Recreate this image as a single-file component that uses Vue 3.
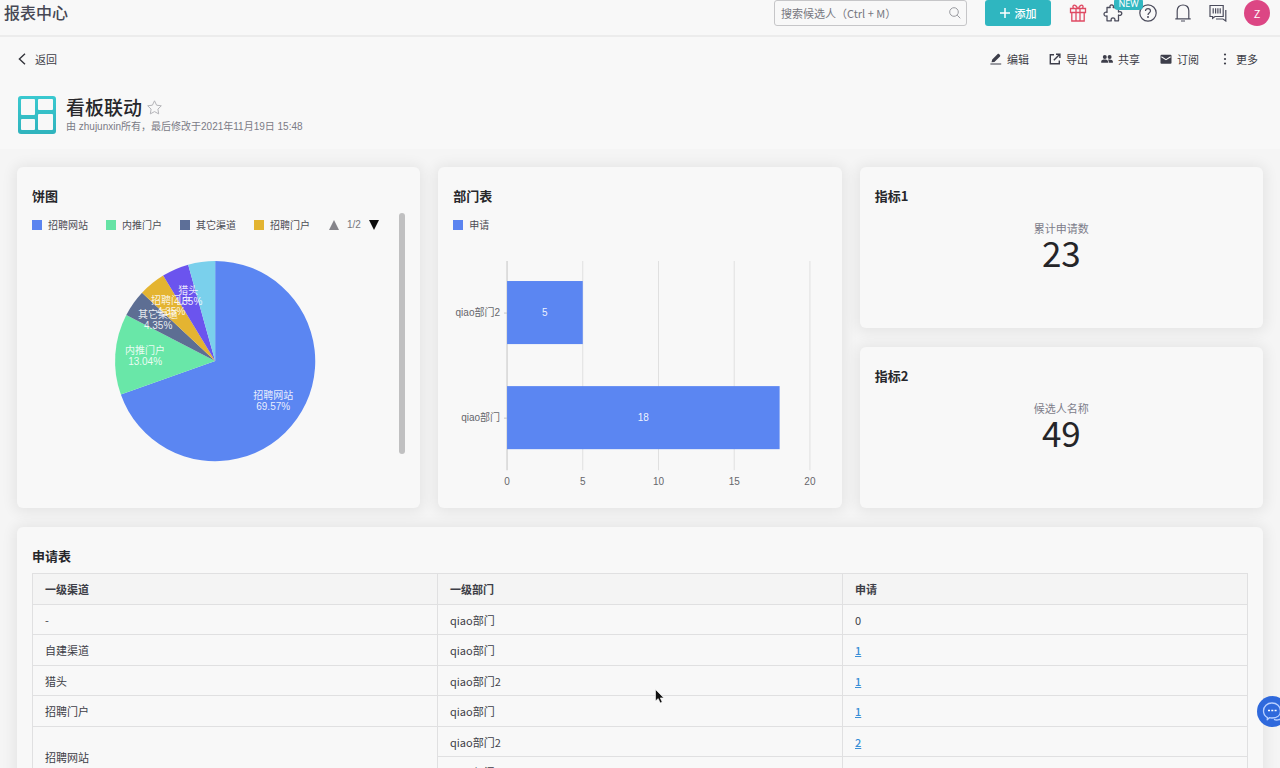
<script setup>
const legend = [
  { name: '招聘网站', color: '#5b84f0' },
  { name: '内推门户', color: '#66e3a5' },
  { name: '其它渠道', color: '#5d6f98' },
  { name: '招聘门户', color: '#e3b431' },
]

const cx = 183
const cy = 111
const radius = 100
const shares = [
  { value: 16, color: '#5b86f2' },
  { value: 3, color: '#69e7a8' },
  { value: 1, color: '#5d6e93' },
  { value: 1, color: '#e4b431' },
  { value: 1, color: '#6b54ee' },
  { value: 1, color: '#7ad0ec' },
]
const total = shares.reduce((sum, s) => sum + s.value, 0)
let start = 0
const slices = shares.map((s) => {
  const end = start + (s.value / total) * Math.PI * 2
  const point = (a) => `${(cx + radius * Math.sin(a)).toFixed(2)} ${(cy - radius * Math.cos(a)).toFixed(2)}`
  const large = end - start > Math.PI ? 1 : 0
  const d = `M${cx} ${cy}L${point(start)}A${radius} ${radius} 0 ${large} 1 ${point(end)}Z`
  start = end
  return { d, color: s.color }
})
const pieLabels = [
  { x: 241, y: 149, name: '招聘网站', pct: '69.57%' },
  { x: 113, y: 104, name: '内推门户', pct: '13.04%' },
  { x: 156, y: 44, name: '猎头', pct: '4.35%' },
  { x: 139, y: 54, name: '招聘门户', pct: '4.35%' },
  { x: 126, y: 68, name: '其它渠道', pct: '4.35%' },
]

const scale = (v) => 54 + v * 15.13
const ticks = [0, 5, 10, 15, 20]
const bars = [
  { name: 'qiao部门2', value: 5, y: 31 },
  { name: 'qiao部门', value: 18, y: 136 },
]

const metrics = [
  { title: '指标1', label: '累计申请数', value: 23 },
  { title: '指标2', label: '候选人名称', value: 49 },
]

const rows = [
  { channel: '-', dept: 'qiao部门', count: 0 },
  { channel: '自建渠道', dept: 'qiao部门', count: 1 },
  { channel: '猎头', dept: 'qiao部门2', count: 1 },
  { channel: '招聘门户', dept: 'qiao部门', count: 1 },
  { channel: '招聘网站', span: 2, dept: 'qiao部门2', count: 2 },
  { dept: 'qiao部门', count: 14 },
]
</script>

<template>
  <div class="page">
    <header class="topbar">
      <h1>报表中心</h1>
      <div class="search">
        <input type="text" aria-label="搜索候选人" placeholder="搜索候选人（Ctrl + M）" />
        <svg width="12" height="12" viewBox="0 0 12 12" fill="none" stroke="#9a9ba0"><circle cx="5" cy="5" r="4.3" /><path d="M8.2 8.2L11.3 11.3" /></svg>
      </div>
      <button class="add" type="button">
        <svg width="10" height="10" viewBox="0 0 10 10" stroke="#fff" stroke-width="1.5"><path d="M5 0V10M0 5H10" /></svg>
        添加
      </button>
      <nav class="tools">
        <button type="button" aria-label="礼物">
          <svg width="18" height="18" viewBox="0 0 18 18" fill="none" stroke="#df4a63" stroke-width="1.3"><path d="M1.5 4.5H16.5V8.5H1.5ZM2.8 8.5V17H15.2V8.5M7 4.5V17M11 4.5V17M8.5 4.3C7.5 1.6 5.8.8 4.7 1.4C3.4 2.2 3.8 3.8 5 4.4M9.5 4.3C10.5 1.6 12.2.8 13.3 1.4C14.6 2.2 14.2 3.8 13 4.4" /></svg>
        </button>
        <button type="button" aria-label="插件">
          <svg width="20" height="18" viewBox="0 0 20 18" fill="none" stroke="#4b4c5c" stroke-width="1.3" stroke-linejoin="round"><path d="M4 3.5H7.2C6.4 1.8 7.4.8 8.7.8S11 1.9 10.2 3.5H15.5V8C17.3 7.2 18.8 8 18.8 9.5S17.3 11.8 15.5 11V16.8H11.8C12.4 15 11.4 13.9 10 13.9S7.7 15 8.3 16.8H4V11.8C2.2 12.6 1 11.4 1 10.1S2.3 7.7 4 8.4Z" /></svg>
          <span class="new">NEW</span>
        </button>
        <button type="button" aria-label="帮助">
          <svg width="18" height="18" viewBox="0 0 18 18" fill="none" stroke="#4b4c5c" stroke-width="1.2"><circle cx="9" cy="9" r="8.2" /><path d="M6.5 7.1C6.5 5.5 7.5 4.6 9 4.6S11.5 5.6 11.5 6.9C11.5 8.7 9 8.7 9 11" /><circle cx="9" cy="13.1" r=".4" fill="#4b4c5c" /></svg>
        </button>
        <button type="button" aria-label="通知">
          <svg width="18" height="18" viewBox="0 0 18 18" fill="none" stroke="#4b4c5c" stroke-width="1.2"><path d="M1.3 14.8H16.7M3.2 14.8V6.8C3.2 3.1 5.6 1 9 1S14.8 3.1 14.8 6.8V14.8M7 17H11" /></svg>
        </button>
        <button type="button" aria-label="消息">
          <svg width="18" height="18" viewBox="0 0 18 18" fill="none" stroke="#4b4c5c" stroke-width="1.2"><path d="M1 1.5H14.2V12.5H6L3.6 14.3V12.5H1ZM4.2 4.3V9.5M6.6 4.3V9.5M8.9 4.3V9.5M11.2 4.3V9.5M16.8 6V17L14 15H7" /></svg>
        </button>
      </nav>
      <button class="avatar" type="button">Z</button>
    </header>

    <div class="actions">
      <button class="back" type="button">
        <svg width="8" height="12" viewBox="0 0 8 12" fill="none" stroke="#33343b" stroke-width="1.4"><path d="M7 .8L1.4 6L7 11.2" /></svg>
        返回
      </button>
      <div class="menu">
        <button type="button">
          <svg width="12" height="12" viewBox="0 0 12 12" fill="#3d3e4a"><path d="M1.5 9.3L2.2 6.6L7.7 1.1C8.1.7 8.6.7 9 1.1L10 2.1C10.4 2.5 10.4 3 10 3.4L4.4 8.9ZM.4 10.4H11.2V11.4H.4Z" /></svg>
          编辑
        </button>
        <div class="pair">
          <button type="button">
            <svg width="12" height="12" viewBox="0 0 12 12" fill="none" stroke="#3d3e4a" stroke-width="1.4"><path d="M5 1.7H1.3V10.8H10.3V7.5M4.8 7.2L10 2M7 1.2H10.9V5" /></svg>
            导出
          </button>
          <button type="button">
            <svg width="12" height="12" viewBox="0 0 12 12" fill="#3d3e4a"><circle cx="3.8" cy="4" r="2" /><circle cx="8.6" cy="4" r="2" /><path d="M.2 9.8V8.6C.2 7.2 2 6.6 3.7 6.6S7 7.2 7 8.6V9.8ZM7.7 9.8V8.4C7.7 7.6 7.3 7 6.9 6.7C9.8 6.3 11.9 7.2 11.9 8.6V9.8Z" /></svg>
            共享
          </button>
        </div>
        <button type="button">
          <svg width="12" height="12" viewBox="0 0 12 12"><rect x=".5" y="1.8" width="11" height="9" rx="1" fill="#3d3e4a" /><path d="M1.4 3.8L6 6.6L10.6 3.8" fill="none" stroke="#f8f8f8" stroke-width="1.1" /></svg>
          订阅
        </button>
        <button type="button">
          <svg width="12" height="12" viewBox="0 0 12 12" fill="#3d3e4a"><circle cx="6" cy="1.5" r="1.1" /><circle cx="6" cy="6" r="1.1" /><circle cx="6" cy="10.5" r="1.1" /></svg>
          更多
        </button>
      </div>
    </div>

    <section class="heading">
      <svg width="38" height="38" viewBox="0 0 38 38">
        <defs><linearGradient id="tile" x1="0" y1="0" x2="0" y2="1"><stop offset="0" stop-color="#3ac9d0" /><stop offset="1" stop-color="#2fb3bd" /></linearGradient></defs>
        <rect width="38" height="38" rx="3" fill="url(#tile)" />
        <path d="M4 3H16Q17 3 17 4V18Q17 19 16 19H4Q3 19 3 18V4Q3 3 4 3ZM21 3H34Q35 3 35 4V13Q35 14 34 14H21Q20 14 20 13V4Q20 3 21 3ZM4 23H16Q17 23 17 24V33Q17 34 16 34H4Q3 34 3 33V24Q3 23 4 23ZM21 18H34Q35 18 35 19V33Q35 34 34 34H21Q20 34 20 33V19Q20 18 21 18Z" fill="#f8f8f8" />
      </svg>
      <div>
        <div class="name">
          <h2>看板联动</h2>
          <button type="button" aria-label="收藏">
            <svg width="15" height="15" viewBox="0 0 15 15" fill="none" stroke="#b4b4b8" stroke-linejoin="round"><path d="M7.5.8L9.6 5.2L14.3 5.8L10.9 9.1L11.7 13.9L7.5 11.6L3.3 13.9L4.1 9.1L.7 5.8L5.4 5.2Z" /></svg>
          </button>
        </div>
        <p>由 zhujunxin所有，最后修改于2021年11月19日 15:48</p>
      </div>
    </section>

    <main class="board">
      <section class="card chart">
        <h3>饼图</h3>
        <div class="legend">
          <span v-for="item in legend" :key="item.name"><i :style="{ background: item.color }"></i>{{ item.name }}</span>
          <div class="pager">
            <button type="button" aria-label="上一页"><svg width="10" height="10" viewBox="0 0 10 10" fill="#85848a"><path d="M5 0L10 10H0Z" /></svg></button>
            <span>1/2</span>
            <button type="button" aria-label="下一页"><svg width="10" height="10" viewBox="0 0 10 10" fill="#0c0c0c"><path d="M0 0H10L5 10Z" /></svg></button>
          </div>
        </div>
        <svg class="plot" viewBox="0 0 373 250">
          <path v-for="s in slices" :key="s.d" :d="s.d" :fill="s.color" />
          <g v-for="l in pieLabels" :key="l.name" fill="#fff" fill-opacity=".88" text-anchor="middle">
            <text :x="l.x" :y="l.y">{{ l.name }}</text>
            <text :x="l.x" :y="l.y + 11">{{ l.pct }}</text>
          </g>
        </svg>
        <div class="thumb"></div>
      </section>

      <section class="card chart">
        <h3>部门表</h3>
        <div class="legend"><span><i :style="{ background: '#5b84f0' }"></i>申请</span></div>
        <svg class="plot" viewBox="0 0 373 250">
          <g v-for="t in ticks" :key="t">
            <path :d="`M${scale(t)} 11V220`" :stroke="t ? '#e0e0e0' : '#c4c4c4'" />
            <text :x="scale(t)" y="235" fill="#66666b" text-anchor="middle">{{ t }}</text>
          </g>
          <g v-for="b in bars" :key="b.name">
            <path :d="`M51 ${b.y + 32}H54`" stroke="#c4c4c4" />
            <text x="47" :y="b.y + 35" fill="#66666b" text-anchor="end">{{ b.name }}</text>
            <rect x="54" :y="b.y" :width="scale(b.value) - 54" height="63" fill="#5b86f2" />
            <text :x="(54 + scale(b.value)) / 2" :y="b.y + 35" fill="#fff" fill-opacity=".9" text-anchor="middle">{{ b.value }}</text>
          </g>
        </svg>
      </section>

      <section v-for="m in metrics" :key="m.title" class="card metric">
        <h3>{{ m.title }}</h3>
        <p>{{ m.label }}</p>
        <strong>{{ m.value }}</strong>
      </section>

      <section class="card records">
        <h3>申请表</h3>
        <table>
          <thead>
            <tr><th scope="col">一级渠道</th><th scope="col">一级部门</th><th scope="col">申请</th></tr>
          </thead>
          <tbody>
            <tr v-for="(r, i) in rows" :key="i">
              <td v-if="r.channel" :rowspan="r.span || 1">{{ r.channel }}</td>
              <td>{{ r.dept }}</td>
              <td><a v-if="r.count" href="#">{{ r.count }}</a><template v-else>0</template></td>
            </tr>
          </tbody>
        </table>
      </section>
    </main>

    <button class="chat" type="button" aria-label="在线客服">
      <svg width="22" height="22" viewBox="0 0 22 22" fill="none" stroke="#b9d0ff" stroke-width="1.3" stroke-linejoin="round"><path d="M5.5 16.6C3 15.2 1.5 12.8 1.5 10C1.5 5.5 5.2 2 10 2S18.5 5.5 18.5 10S14.8 17 10 17C9 17 8.2 16.9 7.4 16.7L5.2 18.8ZM12 18.4C14 19.3 16 19 17.5 18.3L19.5 19.5V16.5C20.3 15.5 20.8 14.5 20.8 13" /><path d="M6 9.5H8M9.3 9.5H11.3M12.6 9.5H14.6" stroke="#fff" stroke-width="1.6" /></svg>
    </button>
    <svg class="cursor" width="10" height="15" viewBox="0 0 10 15"><path d="M.5.5V12L3.2 9.6L5.2 14L7.2 13.1L5.3 8.9H8.8Z" fill="#111" stroke="#fff" stroke-width=".6" /></svg>
  </div>
</template>

<style>
body {
  margin: 0;
  background: #f5f5f5;
}
</style>

<style scoped>
.page {
  position: relative;
  height: 100vh;
  overflow: hidden;
  background: #f5f5f5;
  color: #3d3e47;
  font-family: "Noto Sans CJK SC", sans-serif;
  font-size: 11px;
}
h1, h2, h3, p {
  margin: 0;
}
button {
  display: flex;
  align-items: center;
  justify-content: center;
  padding: 0;
  border: 0;
  background: none;
  color: inherit;
  font: inherit;
}
svg {
  display: block;
  flex: none;
}
.topbar {
  display: flex;
  align-items: center;
  height: 26px;
  padding: 0 10px 9px 4px;
  border-bottom: 2px solid #ececec;
  background: #f8f8f8;
}
h1 {
  flex: 1;
  color: #464754;
  font-size: 16px;
  line-height: 24px;
  padding-bottom: 2px;
  font-weight: 500;
}
.search {
  position: relative;
  width: 193px;
  margin-right: 18px;
}
.search input {
  box-sizing: border-box;
  display: block;
  width: 100%;
  height: 26px;
  padding: 0 24px 0 6px;
  border: 1px solid #c6c6c8;
  border-radius: 3px;
  background: #f8f8f8;
  font: inherit;
}
.search input::placeholder {
  color: #77777f;
  opacity: 1;
}
.search svg {
  position: absolute;
  right: 6px;
  top: 7px;
}
.add {
  gap: 5px;
  width: 66px;
  height: 26px;
  border-radius: 3px;
  background: #2fb6c0;
  color: #fff;
  font-weight: 500;
}
.tools {
  display: flex;
  margin: 0 9px;
}
.tools button {
  position: relative;
  width: 35px;
  height: 26px;
}
.new {
  position: absolute;
  left: 19px;
  top: -2px;
  z-index: 1;
  width: 29px;
  border-radius: 4px;
  background: #31b7c1;
  color: #fff;
  font: 9px/12px "Noto Sans", sans-serif;
}
.avatar {
  width: 26px;
  height: 26px;
  border-radius: 50%;
  background: #dc4684;
  color: #fff;
}
.actions {
  display: flex;
  justify-content: space-between;
  padding: 13px 22px 14px 18px;
  background: #f8f8f8;
}
.actions button {
  gap: 5px;
  height: 18px;
}
.actions .back {
  gap: 9px;
}
.menu {
  display: flex;
  gap: 20px;
}
.pair {
  display: flex;
  gap: 13px;
}
.heading {
  display: flex;
  align-items: center;
  gap: 10px;
  padding: 13px 18px 15px;
  background: #f8f8f8;
}
.name {
  display: flex;
  align-items: center;
  gap: 5px;
}
h2 {
  color: #27272b;
  font-size: 19px;
  line-height: 24px;
  font-weight: 500;
}
.heading p {
  color: #7b7b86;
  font-family: "Liberation Sans", "Noto Sans CJK SC", sans-serif;
  font-size: 10px;
  line-height: 15px;
}
.board {
  display: grid;
  grid-template-columns: repeat(3, minmax(0, 1fr));
  grid-template-rows: 161px 161px auto;
  gap: 19px 18px;
  padding: 18px 17px;
}
.card {
  position: relative;
  padding: 20px 15px 0;
  border-radius: 6px;
  background: #f8f8f8;
  box-shadow: 0 1px 14px 3px rgba(0, 0, 0, 0.07);
}
.chart {
  grid-row: 1 / 3;
}
.metric {
  grid-column: 3;
  text-align: center;
}
.records {
  grid-column: 1 / 4;
  padding-bottom: 15px;
}
h3 {
  color: #27272b;
  font-size: 13px;
  line-height: 18px;
  font-weight: 700;
  text-align: left;
}
.legend {
  display: flex;
  gap: 18px;
  height: 15px;
  margin: 12px 0 18px;
  color: #4c4c54;
  font-size: 10px;
  line-height: 15px;
}
.legend > span {
  display: flex;
  align-items: center;
  gap: 6px;
}
.legend i {
  width: 10px;
  height: 10px;
}
.pager {
  display: flex;
  align-items: center;
  gap: 8px;
  margin-left: 1px;
  color: #77777c;
  font-family: "Liberation Sans", sans-serif;
}
.plot {
  width: 100%;
  font: 10px "Liberation Sans", "Noto Sans CJK SC", sans-serif;
}
.thumb {
  position: absolute;
  right: 15px;
  top: 46px;
  width: 6px;
  height: 241px;
  border-radius: 3px;
  background: #c0c0c1;
}
.metric p {
  margin-top: 15px;
  color: #7d7d8a;
  line-height: 16px;
}
.metric strong {
  display: block;
  color: #252528;
  font-size: 35px;
  line-height: 32px;
  font-weight: 400;
}
table {
  width: 100%;
  margin-top: 8px;
  border-collapse: collapse;
  table-layout: fixed;
}
th, td {
  box-sizing: border-box;
  height: 31px;
  padding: 0 12px;
  border: 1px solid #e0e0e1;
  line-height: 16px;
  text-align: left;
}
tbody tr:nth-child(odd) td {
  height: 30px;
}
th {
  background: #f4f4f4;
  font-weight: 700;
}
a {
  color: #3a8fd6;
  font-weight: 500;
  text-decoration: underline;
}
.chat {
  position: absolute;
  right: -8px;
  bottom: 41px;
  width: 31px;
  height: 31px;
  border-radius: 50%;
  background: #2f69dc;
}
.cursor {
  position: absolute;
  left: 655px;
  top: 689px;
}
</style>
